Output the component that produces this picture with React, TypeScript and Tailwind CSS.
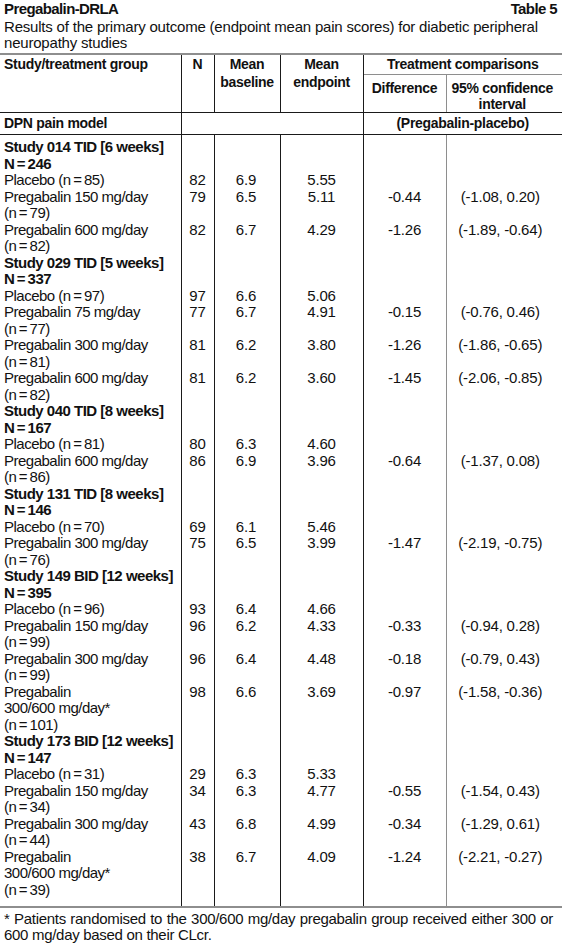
import { Fragment } from "react";

type Arm = {
  label: string[];
  n: string;
  baseline: string;
  endpoint: string;
  diff?: string;
  ci?: string;
};

type Study = {
  title: string;
  total: string;
  arms: Arm[];
};

const T = "\u2009";

const studies: Study[] = [
  {
    title: "Study 014 TID [6 weeks]",
    total: `N${T}=${T}246`,
    arms: [
      { label: [`Placebo (n${T}=${T}85)`], n: "82", baseline: "6.9", endpoint: "5.55" },
      { label: ["Pregabalin 150 mg/day", `(n${T}=${T}79)`], n: "79", baseline: "6.5", endpoint: "5.11", diff: "-0.44", ci: "(-1.08, 0.20)" },
      { label: ["Pregabalin 600 mg/day", `(n${T}=${T}82)`], n: "82", baseline: "6.7", endpoint: "4.29", diff: "-1.26", ci: "(-1.89, -0.64)" },
    ],
  },
  {
    title: "Study 029 TID [5 weeks]",
    total: `N${T}=${T}337`,
    arms: [
      { label: [`Placebo (n${T}=${T}97)`], n: "97", baseline: "6.6", endpoint: "5.06" },
      { label: ["Pregabalin 75 mg/day", `(n${T}=${T}77)`], n: "77", baseline: "6.7", endpoint: "4.91", diff: "-0.15", ci: "(-0.76, 0.46)" },
      { label: ["Pregabalin 300 mg/day", `(n${T}=${T}81)`], n: "81", baseline: "6.2", endpoint: "3.80", diff: "-1.26", ci: "(-1.86, -0.65)" },
      { label: ["Pregabalin 600 mg/day", `(n${T}=${T}82)`], n: "81", baseline: "6.2", endpoint: "3.60", diff: "-1.45", ci: "(-2.06, -0.85)" },
    ],
  },
  {
    title: "Study 040 TID [8 weeks]",
    total: `N${T}=${T}167`,
    arms: [
      { label: [`Placebo (n${T}=${T}81)`], n: "80", baseline: "6.3", endpoint: "4.60" },
      { label: ["Pregabalin 600 mg/day", `(n${T}=${T}86)`], n: "86", baseline: "6.9", endpoint: "3.96", diff: "-0.64", ci: "(-1.37, 0.08)" },
    ],
  },
  {
    title: "Study 131 TID [8 weeks]",
    total: `N${T}=${T}146`,
    arms: [
      { label: [`Placebo (n${T}=${T}70)`], n: "69", baseline: "6.1", endpoint: "5.46" },
      { label: ["Pregabalin 300 mg/day", `(n${T}=${T}76)`], n: "75", baseline: "6.5", endpoint: "3.99", diff: "-1.47", ci: "(-2.19, -0.75)" },
    ],
  },
  {
    title: "Study 149 BID [12 weeks]",
    total: `N${T}=${T}395`,
    arms: [
      { label: [`Placebo (n${T}=${T}96)`], n: "93", baseline: "6.4", endpoint: "4.66" },
      { label: ["Pregabalin 150 mg/day", `(n${T}=${T}99)`], n: "96", baseline: "6.2", endpoint: "4.33", diff: "-0.33", ci: "(-0.94, 0.28)" },
      { label: ["Pregabalin 300 mg/day", `(n${T}=${T}99)`], n: "96", baseline: "6.4", endpoint: "4.48", diff: "-0.18", ci: "(-0.79, 0.43)" },
      { label: ["Pregabalin", "300/600 mg/day*", `(n${T}=${T}101)`], n: "98", baseline: "6.6", endpoint: "3.69", diff: "-0.97", ci: "(-1.58, -0.36)" },
    ],
  },
  {
    title: "Study 173 BID [12 weeks]",
    total: `N${T}=${T}147`,
    arms: [
      { label: [`Placebo (n${T}=${T}31)`], n: "29", baseline: "6.3", endpoint: "5.33" },
      { label: ["Pregabalin 150 mg/day", `(n${T}=${T}34)`], n: "34", baseline: "6.3", endpoint: "4.77", diff: "-0.55", ci: "(-1.54, 0.43)" },
      { label: ["Pregabalin 300 mg/day", `(n${T}=${T}44)`], n: "43", baseline: "6.8", endpoint: "4.99", diff: "-0.34", ci: "(-1.29, 0.61)" },
      { label: ["Pregabalin", "300/600 mg/day*", `(n${T}=${T}39)`], n: "38", baseline: "6.7", endpoint: "4.09", diff: "-1.24", ci: "(-2.21, -0.27)" },
    ],
  },
];

// cell styles per column
const colLabel = "border-r border-r-[#1a1a1a] p-0 pl-[4px] align-top text-left whitespace-nowrap tracking-[-0.5px]";
const colNum = "border-r border-r-[#1a1a1a] p-0 align-top text-center whitespace-nowrap tracking-[-0.2px]";
const colDiff = "border-r border-r-[#8e8e8e] p-0 align-top text-center whitespace-nowrap tracking-[-0.2px]";
const colCi = "p-0 pr-[8px] align-top text-center whitespace-nowrap tracking-[-0.2px]";

const headCell = "border-r border-r-[#1a1a1a] border-b border-b-[#1a1a1a] p-0 align-top text-center font-bold leading-[18px]";

function Spacer({ h }: { h: string }) {
  return (
    <tr className={h}>
      <td className={colLabel} />
      <td className={colNum} />
      <td className={colNum} />
      <td className={colNum} />
      <td className={colDiff} />
      <td className={colCi} />
    </tr>
  );
}

export default function App() {
  return (
    <div className="w-[562px] bg-white text-[#111] font-['Liberation_Sans',Arial,sans-serif] text-[15px]">
      {/* Title */}
      <div className="flex justify-between pl-[4px] pr-[5px] pt-[1px] leading-[16px] font-bold tracking-[-0.6px]">
        <span>Pregabalin-DRLA</span>
        <span>Table 5</span>
      </div>
      <p className="mt-[2px] px-[4px] leading-[16px] whitespace-nowrap tracking-[-0.2px]">
        Results of the primary outcome (endpoint mean pain scores) for diabetic peripheral
        <br />
        neuropathy studies
      </p>

      {/* Table */}
      <div className="mt-[2px] border-y-2 border-[#8e8e8e]">
        <table className="w-full table-fixed border-collapse">
          <colgroup>
            <col className="w-[181px]" />
            <col className="w-[33px]" />
            <col className="w-[66px]" />
            <col className="w-[83px]" />
            <col className="w-[83px]" />
            <col />
          </colgroup>
          <thead className="text-[14px] font-bold tracking-[-0.3px]">
            <tr className="h-[19px]">
              <th rowSpan={2} className={`${headCell} pl-[4px] text-left`}>
                Study/treatment group
              </th>
              <th rowSpan={2} className={headCell}>
                N
              </th>
              <th rowSpan={2} className={headCell}>
                Mean
                <br />
                baseline
              </th>
              <th rowSpan={2} className={headCell}>
                Mean
                <br />
                endpoint
              </th>
              <th colSpan={2} className="border-b border-b-[#8e8e8e] p-0 align-top text-center font-bold leading-[18px]">
                Treatment comparisons
              </th>
            </tr>
            <tr className="h-[38px]">
              <th className="border-r border-r-[#8e8e8e] border-b border-b-[#1a1a1a] p-0 pt-[5px] align-top text-center font-bold leading-[16px]">
                Difference
              </th>
              <th className="border-b border-b-[#1a1a1a] p-0 pt-[5px] pr-[4px] align-top text-center font-bold leading-[16px]">
                95% confidence
                <br />
                interval
              </th>
            </tr>
          </thead>
          <tbody className="leading-[16.5px]">
            <tr className="h-[22px] text-[14px] tracking-[-0.3px]">
              <td className="border-r border-r-[#1a1a1a] border-b border-b-[#1a1a1a] p-0 pl-[4px] align-middle font-bold">
                DPN pain model
              </td>
              <td colSpan={3} className="border-r border-r-[#1a1a1a] border-b border-b-[#1a1a1a] p-0" />
              <td colSpan={2} className="border-b border-b-[#1a1a1a] p-0 align-middle text-center font-bold">
                (Pregabalin-placebo)
              </td>
            </tr>
            <Spacer h="h-[5px]" />
            {studies.map((s) => (
              <Fragment key={s.title}>
                <tr>
                  <td className={`${colLabel} font-bold`}>
                    {s.title}
                    <br />
                    {s.total}
                  </td>
                  <td className={colNum} />
                  <td className={colNum} />
                  <td className={colNum} />
                  <td className={colDiff} />
                  <td className={colCi} />
                </tr>
                {s.arms.map((a, i) => (
                  <tr key={i}>
                    <td className={colLabel}>
                      {a.label.map((l, j) => (
                        <div key={j}>{l}</div>
                      ))}
                    </td>
                    <td className={colNum}>{a.n}</td>
                    <td className={`${colNum} pr-[2px]`}>{a.baseline}</td>
                    <td className={colNum}>{a.endpoint}</td>
                    <td className={colDiff}>{a.diff}</td>
                    <td className={colCi}>{a.ci}</td>
                  </tr>
                ))}
              </Fragment>
            ))}
            <Spacer h="h-[8px]" />
          </tbody>
        </table>
      </div>

      {/* Footnote */}
      <div className="px-[4px] pt-[3px] leading-[16px] tracking-[-0.3px]">
        <div className="whitespace-nowrap text-justify [text-align-last:justify] pr-[5px]">
          * Patients randomised to the 300/600 mg/day pregabalin group received either 300 or
        </div>
        <div>600 mg/day based on their CLcr.</div>
      </div>
    </div>
  );
}
